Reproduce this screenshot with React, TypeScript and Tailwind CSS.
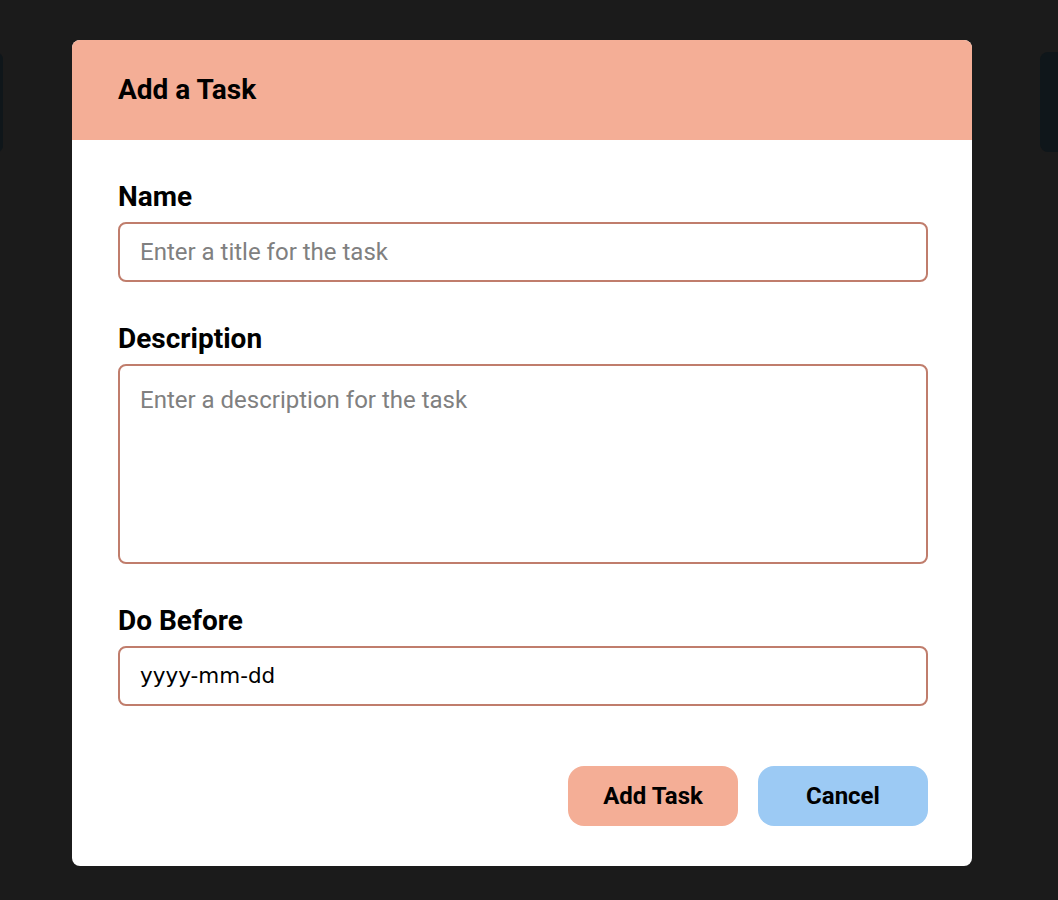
import React from "react";

const roboto = { fontFamily: "Roboto, 'Liberation Sans', sans-serif" };

export default function App() {
	return (
		<div
			className="relative w-[1058px] h-[900px] overflow-hidden bg-[#1b1b1b] font-['Roboto',sans-serif]">
			{/* cards behind the overlay */}
			<div className="absolute left-[-20px] top-[53px] w-[23px] h-[99px] rounded-md bg-[#0f161a]" />
			<div className="absolute left-[1040px] top-[52px] w-[40px] h-[100px] rounded-lg bg-[#0f161a]" />

			<div className="absolute left-[72px] top-[40px] w-[900px] rounded-lg bg-white overflow-hidden">
				<div className="h-[100px] bg-[#f4ae96] flex items-center pl-[46px]">
					<h1 className="text-[28px] font-bold text-black">Add a Task</h1>
				</div>

				<form className="pl-[46px] pr-[44px] pt-[40px] pb-[40px] flex flex-col">
					<label className="text-[28px] font-bold text-black leading-[34px] mb-[8px]">
						Name
					</label>
					<input
						type="text"
						placeholder="Enter a title for the task"
						className="h-[60px] w-full rounded-lg border-2 border-[#c07d6c] px-[20px] text-[24px] text-black placeholder:text-[#808080] outline-none"
					/>

					<label className="text-[28px] font-bold text-black leading-[34px] mt-[40px] mb-[8px]">
						Description
					</label>
					<textarea
						placeholder="Enter a description for the task"
						className="h-[200px] w-full resize-none rounded-lg border-2 border-[#c07d6c] px-[20px] pt-[19px] pb-[16px] text-[24px] leading-[30px] text-black placeholder:text-[#808080] outline-none"
					/>

					<label className="text-[28px] font-bold text-black leading-[34px] mt-[40px] mb-[8px]">
						Do Before
					</label>
					<div className="h-[60px] w-full rounded-lg border-2 border-[#c07d6c] px-[20px] flex items-center">
						<span className="text-[21.5px] text-black font-['DejaVu_Sans',sans-serif]">
							yyyy-mm-dd
						</span>
					</div>

					<div className="flex justify-end gap-[20px] mt-[60px]">
						<button
							type="button"
							style={roboto}
							className="h-[60px] w-[170px] rounded-2xl bg-[#f4ae96] text-[24px] font-bold text-black">
							Add Task
						</button>
						<button
							type="button"
							style={roboto}
							className="h-[60px] w-[170px] rounded-2xl bg-[#9ccaf4] text-[24px] font-bold text-black">
							Cancel
						</button>
					</div>
				</form>
			</div>
		</div>
	);
}
